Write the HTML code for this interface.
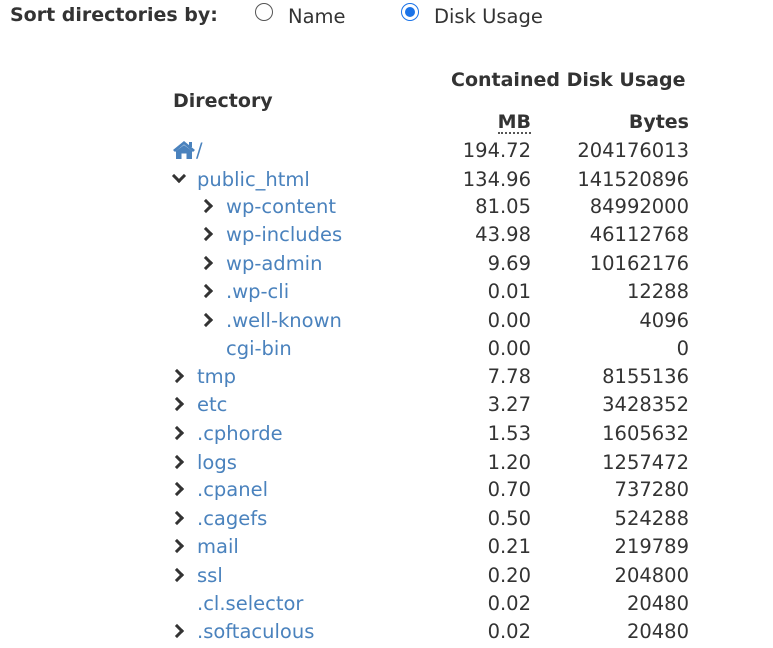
<!DOCTYPE html>
<html><head><style>
body{margin:0;width:773px;height:648px;background:#fff;font-family:"DejaVu Sans","Liberation Sans",sans-serif;font-size:19.5px;color:#333;position:relative;overflow:hidden}
.a{position:absolute;white-space:nowrap;line-height:28px}
.b{font-weight:bold;font-size:19px}
.n{color:#4a82bd}
.r{text-align:right}
.chev{position:absolute;width:7px;height:7px;border-right:3px solid #333;border-bottom:3px solid #333}
.right{transform:rotate(-45deg)}
.down{transform:rotate(45deg)}
.radio{position:absolute;width:16px;height:16px;border:1.5px solid #555;border-radius:50%}
</style></head><body>
<div class="a b" style="left:10px;top:1px">Sort directories by:</div>
<div class="radio" style="left:255px;top:3px"></div>
<div class="a" style="left:288px;top:3px">Name</div>
<div class="radio" style="left:401px;top:3px;border-color:#1a73e8"><div style="position:absolute;left:3px;top:3px;width:10px;height:10px;border-radius:50%;background:#1a73e8"></div></div>
<div class="a" style="left:434px;top:3px">Disk Usage</div>
<div class="a b" style="left:451px;top:66px">Contained Disk Usage</div>
<div class="a b" style="left:173px;top:87px">Directory</div>
<div class="a b r" style="left:431px;width:100px;top:108px"><span style="border-bottom:2px dotted #555;line-height:19px;display:inline-block">MB</span></div>
<div class="a b r" style="left:589px;width:100px;top:108px">Bytes</div>
<svg style="position:absolute;left:172px;top:140px" width="24" height="20" viewBox="0 0 24 20"><path d="M12 1 L1 10 L3 12 L12 4.5 L21 12 L23 10 Z" fill="#4a82bd"/><rect x="17" y="2" width="3" height="5" fill="#4a82bd"/><path d="M4 11 L12 5 L20 11 V19 H14.5 V13.5 H9.5 V19 H4 Z" fill="#4a82bd"/></svg>
<div class="a n" style="left:196px;top:137px">/</div>
<div id="rows"></div>
<script>
var rows=[
[150,null,null,null,"194.72","204176013"],
[179,"down",173,"public_html","134.96","141520896"],
[206,"right",202,"wp-content","81.05","84992000"],
[234,"right",202,"wp-includes","43.98","46112768"],
[263,"right",202,"wp-admin","9.69","10162176"],
[291,"right",202,".wp-cli","0.01","12288"],
[320,"right",202,".well-known","0.00","4096"],
[348,"none",202,"cgi-bin","0.00","0"],
[376,"right",173,"tmp","7.78","8155136"],
[404,"right",173,"etc","3.27","3428352"],
[433,"right",173,".cphorde","1.53","1605632"],
[462,"right",173,"logs","1.20","1257472"],
[489,"right",173,".cpanel","0.70","737280"],
[518,"right",173,".cagefs","0.50","524288"],
[546,"right",173,"mail","0.21","219789"],
[575,"right",173,"ssl","0.20","204800"],
[603,"none",173,".cl.selector","0.02","20480"],
[631,"right",173,".softaculous","0.02","20480"]];
var h="";
rows.forEach(function(r){
var t=r[0]-13;
if(r[1]=="right")h+='<div class="chev right" style="left:'+(r[2]-1)+'px;top:'+(r[0]-5)+'px"></div>';
if(r[1]=="down")h+='<div class="chev down" style="left:'+(r[2]+1)+'px;top:'+(r[0]-8)+'px"></div>';
if(r[3])h+='<div class="a n" style="left:'+(r[2]+24)+'px;top:'+t+'px">'+r[3]+'</div>';
h+='<div class="a r" style="left:431px;width:100px;top:'+t+'px">'+r[4]+'</div>';
h+='<div class="a r" style="left:539px;width:150px;top:'+t+'px">'+r[5]+'</div>';
});
document.getElementById("rows").innerHTML=h;
</script>
</body></html>
